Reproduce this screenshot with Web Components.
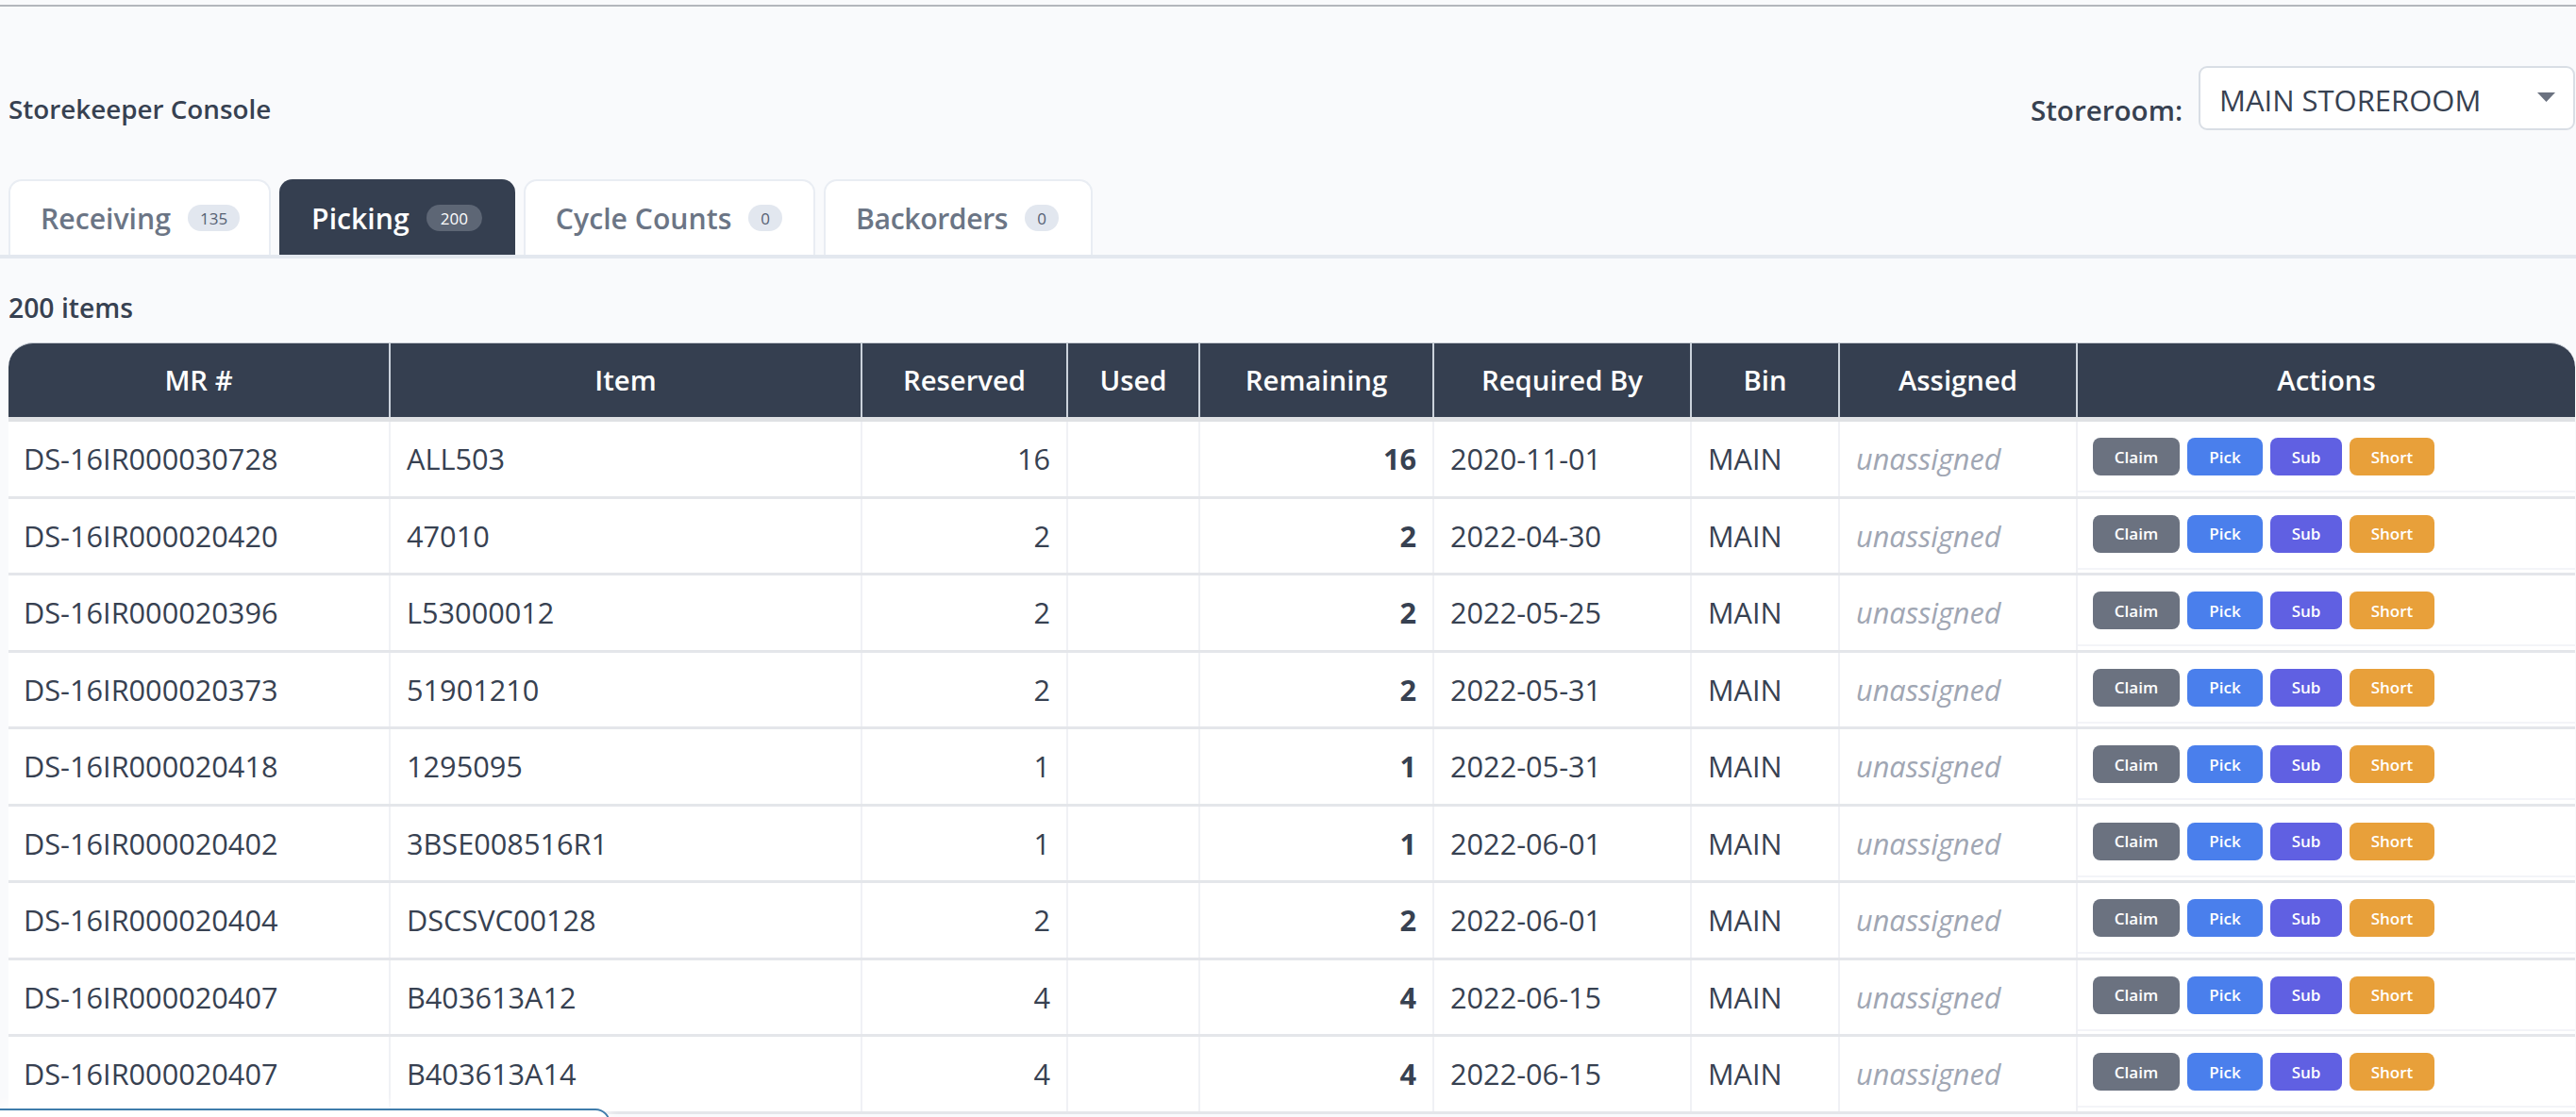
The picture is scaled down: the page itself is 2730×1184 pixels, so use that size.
<!DOCTYPE html>
<html>
<head>
<meta charset="utf-8">
<title>Storekeeper Console</title>
<style>
  html, body { margin: 0; height: 1184px; overflow: hidden; background: #f9fafc; }
  body { font-family: "Open Sans", "Noto Sans", sans-serif; color: #374151; }
</style>
</head>
<body>
<storekeeper-console></storekeeper-console>

<script>
const COLUMNS = '405px 500px 218px 140px 248px 273px 157px 252px 1fr';

const ROWS = [
  ['DS-16IR000030728', 'ALL503', 16, 16, '2020-11-01'],
  ['DS-16IR000020420', '47010', 2, 2, '2022-04-30'],
  ['DS-16IR000020396', 'L53000012', 2, 2, '2022-05-25'],
  ['DS-16IR000020373', '51901210', 2, 2, '2022-05-31'],
  ['DS-16IR000020418', '1295095', 1, 1, '2022-05-31'],
  ['DS-16IR000020402', '3BSE008516R1', 1, 1, '2022-06-01'],
  ['DS-16IR000020404', 'DSCSVC00128', 2, 2, '2022-06-01'],
  ['DS-16IR000020407', 'B403613A12', 4, 4, '2022-06-15'],
  ['DS-16IR000020407', 'B403613A14', 4, 4, '2022-06-15'],
];

class TabItem extends HTMLElement {
  constructor() {
    super();
    this.shadowDOM = this.attachShadow({mode: 'open'});
    this.shadowDOM.innerHTML = `
      <style>
        :host {
          box-sizing: border-box;
          display: flex;
          align-items: center;
          gap: 18px;
          height: 80px;
          padding: 0 31px 0 32px;
          background: #fff;
          border: 2px solid #e9edf3;
          border-bottom: none;
          border-radius: 14px 14px 0 0;
          font-size: 30.2px;
          font-weight: 600;
          color: #6b7585;
        }
        :host([active]) {
          padding-right: 33px;
          background: #353f50;
          border-color: #353f50;
          color: #fff;
        }
        .count {
          display: flex;
          align-items: center;
          justify-content: center;
          height: 28px;
          padding: 0 13px;
          border-radius: 14px;
          background: #e2e7ef;
          color: #566173;
          font-size: 17px;
          font-weight: 400;
          letter-spacing: 0;
        }
        :host([active]) .count {
          padding: 0 15px;
          background: #5d6675;
          color: #fff;
        }
      </style>
      <slot></slot>
      <span class="count">${this.getAttribute('count')}</span>
    `;
  }
}

class TabBar extends HTMLElement {
  constructor() {
    super();
    this.attachShadow({mode: 'open'}).innerHTML = `
      <style>
        :host {
          display: flex;
          gap: 9px;
          padding-left: 9px;
          border-bottom: 4px solid #e3e8ef;
        }
      </style>
      <slot></slot>
    `;
  }
}

class StoreSelect extends HTMLElement {
  constructor() {
    super();
    this.attachShadow({mode: 'open'}).innerHTML = `
      <style>
        :host {
          box-sizing: border-box;
          display: flex;
          align-items: center;
          justify-content: space-between;
          width: 399px;
          height: 68px;
          padding: 0 19px 0 20px;
          background: #fff;
          border: 2px solid #d9dee5;
          border-radius: 9px;
          font-size: 31px;
          color: #374151;
        }
        .value { position: relative; top: 2px; }
        svg { display: block; margin-bottom: 2px; }
      </style>
      <span class="value"><slot></slot></span>
      <svg width="19" height="10" viewBox="0 0 19 10"><path d="M0 0h19L9.5 10z" fill="#6b7280"/></svg>
    `;
  }
}

class ConsoleHeader extends HTMLElement {
  constructor() {
    super();
    this.attachShadow({mode: 'open'}).innerHTML = `
      <style>
        :host {
          display: flex;
          justify-content: space-between;
          align-items: center;
          padding: 63px 1px 52px 9px;
        }
        .title, .label {
          position: relative;
          font-weight: 600;
          color: #374151;
        }
        .title { top: 11px; font-size: 27.8px; }
        .store { display: flex; align-items: center; gap: 17px; }
        .label { top: 12px; font-size: 29.6px; }
      </style>
      <span class="title">Storekeeper Console</span>
      <div class="store">
        <span class="label">Storeroom:</span>
        <store-select>MAIN STOREROOM</store-select>
      </div>
    `;
  }
}

class ActionButton extends HTMLElement {
  constructor() {
    super();
    this.attachShadow({mode: 'open'}).innerHTML = `
      <style>
        :host {
          box-sizing: border-box;
          display: flex;
          align-items: center;
          justify-content: center;
          height: 40px;
          width: var(--w);
          border-radius: 8px;
          background: var(--bg);
          color: #fff;
          font-size: 17px;
          font-weight: 600;
        }
      </style>
      <slot></slot>
    `;
  }
}

class TableHead extends HTMLElement {
  constructor() {
    super();
    const names = ['MR #', 'Item', 'Reserved', 'Used', 'Remaining', 'Required By', 'Bin', 'Assigned', 'Actions'];
    this.attachShadow({mode: 'open'}).innerHTML = `
      <style>
        :host {
          display: grid;
          grid-template-columns: ${COLUMNS};
          height: 84px;
          box-sizing: border-box;
          background: #353f50;
          border-top: 1px solid #c9ced6;
          border-bottom: 5px solid #dfe1e4;
          border-radius: 26px 26px 0 0;
          overflow: hidden;
          color: #fff;
          font-size: 29.3px;
          font-weight: 600;
        }
        div {
          display: flex;
          align-items: center;
          justify-content: center;
          border-right: 2px solid #cbd2db;
        }
        div:last-child { border-right: none; }
      </style>
      ${names.map(n => `<div>${n}</div>`).join('')}
    `;
  }
}

class PickRow extends HTMLElement {
  set item(r) {
    const shadow = this.attachShadow({mode: 'open'});
    shadow.innerHTML = `
      <style>
        :host {
          display: grid;
          grid-template-columns: ${COLUMNS};
          height: 81.5px;
          box-sizing: border-box;
          background: #fff;
          border-bottom: 3px solid #e4e6ea;
          font-size: 30.7px;
          color: #374151;
        }
        .cell {
          display: flex;
          align-items: center;
          padding: 0 17px;
          border-right: 2px solid #f0f1f5;
          min-width: 0;
        }
        .first { padding-left: 16px; }
        .num { justify-content: flex-end; }
        .bold { font-weight: 700; }
        .muted { font-style: italic; color: #a0a6b3; }
        .actions {
          padding: 0;
          border-right: none;
        }
        .buttons {
          box-sizing: border-box;
          display: flex;
          gap: 8px;
          align-self: flex-start;
          height: 75px;
          width: 100%;
          padding: 17px 0 0 16px;
          border-bottom: 2px solid #f3f4f8;
        }
      </style>
      <div class="cell first">${r[0]}</div>
      <div class="cell">${r[1]}</div>
      <div class="cell num">${r[2]}</div>
      <div class="cell"></div>
      <div class="cell num bold">${r[3]}</div>
      <div class="cell">${r[4]}</div>
      <div class="cell">MAIN</div>
      <div class="cell muted">unassigned</div>
      <div class="cell actions">
        <div class="buttons">
          <action-button style="--w:92px;--bg:#6b7280">Claim</action-button>
          <action-button style="--w:80px;--bg:#4a7fec">Pick</action-button>
          <action-button style="--w:76px;--bg:#6060e2">Sub</action-button>
          <action-button style="--w:90px;--bg:#e8a03a">Short</action-button>
        </div>
      </div>
    `;
  }
}

class PickingTable extends HTMLElement {
  constructor() {
    super();
    const shadow = this.attachShadow({mode: 'open'});
    shadow.innerHTML = `
      <style>
        :host { display: block; margin: 0 1px 0 9px; }
      </style>
      <table-head></table-head>
    `;
    ROWS.forEach(r => {
      const row = document.createElement('pick-row');
      row.item = r;
      shadow.appendChild(row);
    });
  }
}

class DockedPanel extends HTMLElement {
  constructor() {
    super();
    this.attachShadow({mode: 'open'}).innerHTML = `
      <style>
        :host {
          position: absolute;
          left: -2px;
          top: 1175px;
          box-sizing: border-box;
          width: 649px;
          height: 40px;
          background: #fff;
          border: 2px solid #3f7cab;
          border-radius: 0 16px 0 0;
          box-shadow: 0 -6px 12px rgba(255, 255, 255, .8);
        }
      </style>
    `;
  }
}

class StorekeeperConsole extends HTMLElement {
  constructor() {
    super();
    this.attachShadow({mode: 'open'}).innerHTML = `
      <style>
        :host { display: block; padding-top: 5px; }
        .rule { height: 2px; background: #b3b7bc; }
        .count {
          box-sizing: border-box;
          display: flex;
          align-items: center;
          height: 89px;
          padding: 15px 0 0 9px;
          font-size: 28.3px;
          font-weight: 600;
        }
      </style>
      <div class="rule"></div>
      <console-header></console-header>
      <tab-bar>
        <tab-item count="135">Receiving</tab-item>
        <tab-item count="200" active>Picking</tab-item>
        <tab-item count="0" style="padding-right:33px">Cycle Counts</tab-item>
        <tab-item count="0" style="padding-right:34px;letter-spacing:-.4px">Backorders</tab-item>
      </tab-bar>
      <div class="count">200 items</div>
      <picking-table></picking-table>
      <docked-panel></docked-panel>
    `;
  }
}

customElements.define('tab-item', TabItem);
customElements.define('tab-bar', TabBar);
customElements.define('store-select', StoreSelect);
customElements.define('console-header', ConsoleHeader);
customElements.define('action-button', ActionButton);
customElements.define('table-head', TableHead);
customElements.define('pick-row', PickRow);
customElements.define('picking-table', PickingTable);
customElements.define('docked-panel', DockedPanel);
customElements.define('storekeeper-console', StorekeeperConsole);
</script>
</body>
</html>
